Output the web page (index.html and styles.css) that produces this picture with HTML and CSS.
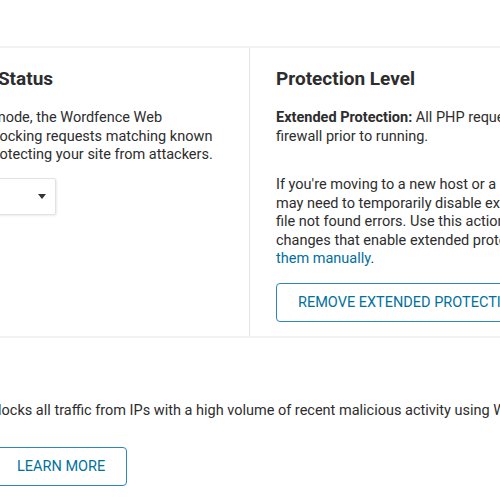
FILE: index.html
```html
<!DOCTYPE html>
<html>
<head>
<meta charset="utf-8">
<link rel="stylesheet" href="styles.css">
</head>
<body>
<div class="top-card"></div>
<div class="status-card">
  <div class="col col-left">
    <h2 class="col-title col-title-left">Web Application Firewall Status</h2>
    <p class="text"><strong>Enabled and Protecting:</strong> In this mode, the Wordfence Web Application Firewall is actively blocking requests matching known attack patterns and is actively protecting your site from attackers.</p>
    <div class="select">
      <span class="select-value">Enabled and Protecting</span>
      <span class="select-arrow"></span>
    </div>
  </div>
  <div class="col col-right">
    <h2 class="col-title">Protection Level</h2>
    <p class="text"><strong>Extended Protection:</strong> All PHP requests will be processed by the firewall prior to running.</p>
    <p class="text text-gap">If you're moving to a new host or a new installation location, you may need to temporarily disable extended protection to avoid any file not found errors. Use this action to remove the configuration changes that enable extended protection mode or you can <a class="link" href="#">remove them manually</a>.</p>
    <a class="btn" href="#">Remove Extended Protection</a>
  </div>
</div>
<div class="bottom-card">
  <p class="text">Blocks all traffic from IPs with a high volume of recent malicious activity using Wordfence's real-time IP blacklist.</p>
  <a class="btn btn-learn" href="#">Learn More</a>
</div>
</body>
</html>
```
FILE: styles.css
```css
html, body {
  margin: 0;
  padding: 0;
}
body {
  background: #f1f1f1;
  font-family: Roboto, "Liberation Sans", sans-serif;
  color: #2d2d2d;
  overflow: hidden;
  width: 500px;
  height: 500px;
}
.top-card {
  height: 46px;
  background: #fff;
}
.status-card {
  margin-top: 2px;
  margin-left: -235px;
  width: 1000px;
  display: flex;
  align-items: stretch;
  background: #fff;
}
.col {
  width: 432px;
  padding: 19px 26px 14px 26px;
  flex: none;
}
.col-left {
  border-right: 1px solid #e4e4e4;
}
.col-title {
  margin: 0;
  font-size: 19px;
  line-height: 23px;
  font-weight: 700;
  color: #2d2d2d;
  white-space: nowrap;
}
.col-title-left {
  margin-left: -8px;
}
.text {
  margin: 19px 0 0 0;
  font-size: 14.5px;
  line-height: 18.5px;
}
.text strong {
  font-weight: 700;
}
.text-gap {
  margin-top: 30px;
}
.link {
  color: #00709e;
  text-decoration: none;
}
.select {
  margin-top: 13px;
  width: 265px;
  height: 37px;
  box-sizing: border-box;
  border: 1px solid #e2e2e2;
  box-shadow: 1px 1px 2px rgba(0,0,0,0.08);
  border-radius: 2px;
  display: flex;
  align-items: center;
  justify-content: space-between;
  padding: 0 9px 0 12px;
  font-size: 14.5px;
}
.select-arrow {
  width: 0;
  height: 0;
  border-left: 4px solid transparent;
  border-right: 4px solid transparent;
  border-top: 5px solid #333;
}
.btn {
  display: inline-block;
  margin-top: 14px;
  box-sizing: border-box;
  height: 39px;
  line-height: 37px;
  padding: 0 21px;
  border: 1px solid #2a86bd;
  border-radius: 4px;
  color: #00709e;
  text-transform: uppercase;
  text-decoration: none;
  font-size: 14.5px;
  white-space: nowrap;
}
.bottom-card {
  margin-top: 2px;
  background: #fff;
  height: 200px;
  padding: 64px 0 0 0;
  margin-left: -5px;
}
.bottom-card .text {
  margin: 0 0 0 -6px;
  white-space: nowrap;
}
.btn-learn {
  margin-top: 27px;
}
```
